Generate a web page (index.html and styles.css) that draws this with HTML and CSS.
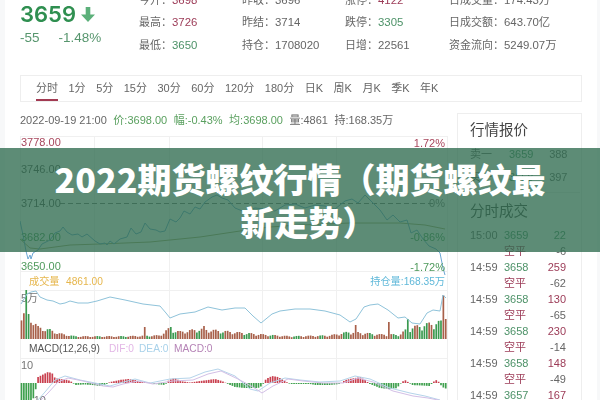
FILE: index.html
```html
<!DOCTYPE html>
<html lang="zh-CN">
<head>
    <meta charset="UTF-8">
    <title>2022期货螺纹行情</title>
    <link rel="stylesheet" href="styles.css">
</head>
<body>
<div class="page">
    <div class="quote-head">
        <div class="last-price">
            <div class="price-now">3659
                <svg class="price-arrow" width="16" height="17" viewBox="0 0 16 17"><path d="M5.7 1h4.6v7.5H15L8 16 1 8.500h4.700z"/></svg>
            </div>
            <div class="price-change"><span>-55</span><span>-1.48%</span></div>
        </div>
        <div class="stat-col stat-a">
            <div>今开：<b class="up">3698</b></div>
            <div>最高：<b class="up">3726</b></div>
            <div>最低：<b class="down">3650</b></div>
        </div>
        <div class="stat-col stat-b">
            <div>昨收：<b>3696</b></div>
            <div>昨结：<b>3714</b></div>
            <div>持仓：<b>1708020</b></div>
        </div>
        <div class="stat-col stat-c">
            <div>涨停：<b class="up">4122</b></div>
            <div>跌停：<b class="down">3305</b></div>
            <div>日增：<b>22561</b></div>
        </div>
        <div class="stat-col stat-d">
            <div>日成交量：<b>174.43万</b></div>
            <div>日成交额：<b>643.70亿</b></div>
            <div>资金流向：<b>5249.07万</b></div>
        </div>
    </div>

    <div class="tabs">
        <span class="tab active">分时</span>
        <span class="tab">1分</span>
        <span class="tab">5分</span>
        <span class="tab">15分</span>
        <span class="tab">30分</span>
        <span class="tab">60分</span>
        <span class="tab">120分</span>
        <span class="tab">180分</span>
        <span class="tab">日K</span>
        <span class="tab">周K</span>
        <span class="tab">月K</span>
        <span class="tab">季K</span>
        <span class="tab">年K</span>
    </div>

    <div class="board">
        <div class="chart-col">
            <div class="tick-info">
                <span>2022-09-19 21:00</span>
                <span class="tick-green">价:3698.00</span>
                <span class="tick-green">幅:-0.43%</span>
                <span class="tick-green">均:3698.00</span>
                <span>量:4861</span>
                <span>持:168.35万</span>
            </div>
            <svg id="chart" class="chart" width="428" height="265" viewBox="20 135 428 265">
                <g class="grid">
                    <path d="M20.5 135V400M94.5 135V400M169.5 135V400M262.5 135V400M336.5 135V400M447.5 135V400"/>
                    <path d="M20 135.500H448M20 270.500H448M20 289.500H448M20 357.500H448"/>
                </g>
                <path class="mid-line" d="M60 202.500H435"/>
                <polyline class="avg-line" points="20,238 30,247 40,248 55,246 70,244 100,243 150,241 200,236 240,230 270,226 300,224 350,222 400,222 425,224 445,228"/>
                <polyline class="price-line" points="20,220 23,234 26,250 28,258 30,254 31,258 33,252 38,249 42,243 50,239 55,232 60,230 63,226 67,231 72,234 78,233 82,236 87,233 95,240 100,243 105,242 107,244 110,240 114,243 120,238 127,236 131,227 136,233 141,231 145,222 150,228 156,229 160,231 165,230 170,218 176,221 180,217 184,210 190,213 195,206 200,208 205,201 212,196 217,194 222,197 228,199 235,207 245,211 255,207 265,208 275,210 285,204 295,203 305,207 315,204 325,205 335,208 345,200 352,198 358,202 365,194 372,201 380,209 387,219 393,214 400,221 407,219 411,232 417,229 423,238 429,245 436,248 440,252 443,267 445,274"/>

                <text class="axis up" x="21" y="145">3778.00</text>
                <text class="axis dark" x="21" y="172">3746.00</text>
                <text class="axis dark" x="21" y="206">3714.00</text>
                <text class="axis down" x="21" y="240">3682.00</text>
                <text class="axis down" x="21" y="269">3650.00</text>
                <text class="axis up" x="445" y="146" text-anchor="end">1.72%</text>
                <text class="axis gray" x="445" y="206" text-anchor="end">0%</text>
                <text class="axis down" x="445" y="240" text-anchor="end">-0.86%</text>
                <text class="axis down" x="445" y="270" text-anchor="end">-1.72%</text>

                <text class="legend vol" x="29" y="284">成交量</text>
                <text class="legend vol" x="66" y="284">4861.00</text>
                <text class="legend oi" x="445" y="284" text-anchor="end">持仓量:168.35万</text>
                <text class="axis gray" x="21" y="301">5万</text>
                <g id="volBars"></g>
                <polyline class="oi-line" points="21,303 27,293 31,291 36,290 40,296 47,299 53,300 60,303 65,302 70,300 78,302 88,302 97,300 110,296 125,299 143,303 160,305 166,312 170,317 180,313 195,311 208,306 222,309 235,307 245,307 253,315 261,322 272,313 280,310 295,308 310,308 325,310 340,314 350,321 356,318 364,306 370,304 378,303 388,309 398,317 405,316 412,322 420,323 427,312 433,309 440,310 443,294 446,297"/>

                <text class="legend dark" x="29" y="351">MACD(12,26,9)</text>
                <text class="legend dif" x="109" y="351">DIF:0</text>
                <text class="legend dea" x="139" y="351">DEA:0</text>
                <text class="legend macd" x="174" y="351">MACD:0</text>
                <text class="axis gray" x="21" y="368">10</text>
                <text class="axis gray" x="30" y="403">-10</text>
                <g id="macdBars"></g>
                <polyline class="dea-line" points="37,400 45,391 55,379 65,375 80,379 100,383 110,385 120,382 135,378 150,382 170,378 190,377 205,371 218,368 235,375 250,388 258,390 270,382 285,377 300,379 320,381 340,380 355,375 370,378 390,387 410,392 425,395 440,399"/>
                <polyline class="dif-line" points="40,400 48,392 58,381 68,377 83,380 103,385 113,386 123,383 138,380 153,383 173,380 193,379 208,373 221,370 238,378 253,386 262,392 273,385 288,378 303,380 323,382 343,382 358,377 373,381 393,390 413,395 428,397 443,400"/>
            </svg>
        </div>

        <aside class="side">
            <h3 class="side-title">行情报价</h3>
            <div class="book">
                <div class="book-row"><span>卖一</span><span class="down">3659</span><span class="num">388</span></div>
                <div class="book-row"><span>买一</span><span class="down">3658</span><span class="num">397</span></div>
            </div>
            <h3 class="side-title trades-title">分时成交</h3>
            <div class="trades">
                <span>15:00</span><span class="down">3659</span><span class="num down">22</span>
                <span></span><span class="up">空平</span><span class="num">-6</span>
                <span>14:59</span><span class="down">3658</span><span class="num up">259</span>
                <span></span><span class="up">空平</span><span class="num">-62</span>
                <span>14:59</span><span class="down">3658</span><span class="num up">130</span>
                <span></span><span class="up">空平</span><span class="num">-65</span>
                <span>14:59</span><span class="down">3658</span><span class="num up">230</span>
                <span></span><span class="up">空平</span><span class="num">-14</span>
                <span>14:59</span><span class="down">3658</span><span class="num up">148</span>
                <span></span><span class="up">空平</span><span class="num">-49</span>
                <span>14:59</span><span class="down">3657</span><span class="num up">167</span>
            </div>
        </aside>
    </div>
</div>

<div class="banner">
    <h1 class="banner-title">2022期货螺纹行情（期货螺纹最新走势<span class="close-paren">）</span></h1>
</div>
<script src="charts.js"></script>
</body>
</html>
```
FILE: styles.css
```css
* {
    box-sizing: border-box;
}

html, body {
    margin: 0;
    height: 100%;
}

body {
    position: relative;
    width: 600px;
    height: 400px;
    overflow: hidden;
    background: #f7f8f9;
    font-family: "Liberation Sans", "Noto Sans CJK SC", sans-serif;
    color: #666;
}

.page {
    width: 592px;
    height: 400px;
    margin-left: 5px;
    padding-left: 15px;
    background: #fff;
    filter: blur(0.45px);
    overflow: hidden;
}

.up {
    color: #9c3b57;
}

.down {
    color: #4d9268;
}

/* head */
.quote-head {
    display: flex;
    align-items: flex-end;
    height: 56px;
    overflow: hidden;
}

.last-price {
    width: 119px;
    align-self: flex-start;
    padding-top: 1px;
}

.price-now {
    display: flex;
    align-items: center;
    gap: 4px;
    font-family: Inter, "Liberation Sans", sans-serif;
    font-size: 22px;
    font-weight: 600;
    line-height: 27px;
    color: #2f8f50;
}

.price-arrow {
    fill: #5cb07a;
}

.price-change {
    display: flex;
    gap: 19px;
    margin-top: 2px;
    font-size: 13.500px;
    line-height: 16px;
    color: #57966e;
}

.stat-col {
    font-size: 11px;
    line-height: 22.500px;
    white-space: nowrap;
}

.stat-col b {
    font-weight: normal;
    font-size: 11.400px;
}

.stat-a {
    width: 103px;
}

.stat-b {
    width: 103px;
}

.stat-c {
    width: 104px;
}

/* tabs */
.tabs {
    display: flex;
    gap: 10.500px;
    width: 562px;
    height: 27px;
    margin-top: 19px;
    padding-left: 15px;
    border: 1px solid #eeeeee;
    font-size: 11px;
    line-height: 24px;
}

.tab {
    height: 25px;
}

.tab.active {
    border-bottom: 2px solid #a23a52;
}

/* main */
.board {
    display: flex;
    gap: 9px;
    margin-top: 8px;
}

.chart-col {
    width: 428px;
}

.tick-info {
    display: flex;
    gap: 6.500px;
    height: 25px;
    margin-top: 2px;
    font-size: 11px;
    line-height: 16px;
    white-space: nowrap;
}

.tick-green {
    color: #5aa05f;
}

.chart {
    display: block;
    margin-top: -1px;
}

.grid path {
    fill: none;
    stroke: #f0f0f0;
}

.mid-line {
    fill: none;
    stroke: #777;
    stroke-dasharray: 5 3;
}

.price-line {
    fill: none;
    stroke: #6da7d4;
}

.avg-line {
    fill: none;
    stroke: #a8a873;
}

.oi-line {
    fill: none;
    stroke: #8fc3da;
}

.dea-line {
    fill: none;
    stroke: #b5d4ea;
}

.dif-line {
    fill: none;
    stroke: #d3bfe6;
}

.axis {
    font-size: 11px;
}

.axis.up {
    fill: #a8465c;
}

.axis.down {
    fill: #4f9a5c;
}

.axis.dark {
    fill: #555;
}

.axis.gray {
    fill: #777;
}

.legend {
    font-size: 10.200px;
}

.legend.vol {
    fill: #e6b64c;
}

.legend.oi {
    fill: #5fb8d9;
}

.legend.dark {
    fill: #555;
}

.legend.dif {
    fill: #e3b7e6;
}

.legend.dea {
    fill: #a9d2ea;
}

.legend.macd {
    fill: #b583b6;
}

/* side */
.side {
    width: 125px;
    height: 300px;
    margin-top: 3px;
    padding: 6px 15px 0 12px;
    border: 1px solid #eeeeee;
    border-bottom: 0;
    font-size: 11px;
    overflow: hidden;
}

.side-title {
    margin: 0;
    font-size: 14.500px;
    font-weight: normal;
    line-height: 20px;
    color: #444;
}

.book {
    margin: 1px -14px 0 -11px;
    padding: 2px 14px 3px 11px;
    border-bottom: 1px solid #eeeeee;
}

.book-row {
    display: grid;
    grid-template-columns: 39px 1fr 34px;
    line-height: 23px;
}

.num {
    text-align: right;
}

.trades-title {
    margin-top: 8px;
}

.trades {
    display: grid;
    grid-template-columns: 34px 1fr 30px;
    margin-top: 6px;
    line-height: 16px;
}

/* title band over the picture */
.banner {
    position: absolute;
    left: 0;
    top: 148px;
    display: flex;
    align-items: center;
    justify-content: center;
    width: 600px;
    height: 104px;
    padding: 0 50px;
    background: rgba(47, 107, 80, 0.78);
}

.banner-title {
    margin: 0;
    font-family: "Noto Sans CJK SC", sans-serif;
    font-size: 34px;
    font-weight: 900;
    line-height: 43px;
    color: #fff;
    text-align: center;
}

.close-paren {
    margin-right: -17px;
}
```
FILE: charts.js
```js
// volume + macd bars, drawn from key points
var SVGNS = 'http://www.w3.org/2000/svg';
var STEP = 2.37;

function valueAt(points, x) {
    for (var i = 1; i < points.length; i++) {
        if (x <= points[i][0]) {
            var a = points[i - 1], b = points[i];
            return a[1] + (b[1] - a[1]) * (x - a[0]) / (b[0] - a[0]);
        }
    }
    return points[points.length - 1][1];
}

function addBar(group, x, y1, y2, color, width) {
    var line = document.createElementNS(SVGNS, 'line');
    line.setAttribute('x1', x);
    line.setAttribute('x2', x);
    line.setAttribute('y1', y1);
    line.setAttribute('y2', y2);
    line.setAttribute('stroke', color);
    line.setAttribute('stroke-width', width);
    group.appendChild(line);
}

var volume = [
    [20, 26], [27, 30], [32, 22], [38, 13], [50, 10], [60, 6], [75, 3], [90, 3], [120, 3], [160, 4],
    [168, 11], [180, 8], [200, 11], [220, 9], [240, 7], [262, 5], [290, 3], [330, 4], [350, 8],
    [380, 5], [400, 5], [408, 12], [430, 17], [447, 20]
];
var spikes = { 27: 49, 145: 12, 170: 12, 205: 13, 355: 14, 388: 17, 408: 20, 443: 44, 446: 20 };

var volGroup = document.getElementById('volBars');
for (var x = 21.5; x < 447; x += STEP) {
    var wiggle = 0.55 + 0.45 * Math.abs(Math.sin(x * 12.9898));
    var h = valueAt(volume, x) * wiggle;
    for (var key in spikes) {
        if (Math.abs(key - x) < STEP / 2) h = spikes[key];
    }
    var green = x < 30 || x > 405 ? Math.sin(x * 3.1) > -0.5 : Math.sin(x * 7.7) > 0.75;
    addBar(volGroup, x, 338, 338 - h, green ? '#3a9a50' : '#a8604a', 1.7);
}

var macd = [
    [20, -18], [25, -20], [30, -22], [34, -14], [36, -5], [38, 6], [42, 8], [48, 11], [52, 10], [55, 5],
    [60, 4], [68, 3], [72, 1], [75, -2], [85, -1.5], [92, -2], [100, -3], [105, -2], [110, 1], [120, 3],
    [128, 4], [135, 3], [140, 1], [146, 1], [155, -1], [165, -2], [169, 3], [175, 5], [180, 2], [190, 0.5],
    [200, 2], [208, 3], [215, 4], [222, 2], [228, -1], [235, -4], [245, -5], [258, -5], [262, -3], [266, 4],
    [272, 7], [278, 6], [285, 2], [290, -1], [300, -1], [310, -1], [315, -2], [330, -2], [340, -1], [345, 3],
    [355, 5], [360, 6], [365, 3], [370, -1], [380, -5], [390, -6], [397, -5], [402, 1], [405, 3], [408, 1],
    [412, -2], [430, -3], [433, 1], [436, 3], [439, 1], [442, -4], [447, -6]
];

var macdGroup = document.getElementById('macdBars');
for (var m = 21.5; m < 447; m += STEP) {
    var v = valueAt(macd, m);
    addBar(macdGroup, m, 382, 382 - v, v > 0 ? '#c9404f' : '#3fa04e', 1.7);
}
```
